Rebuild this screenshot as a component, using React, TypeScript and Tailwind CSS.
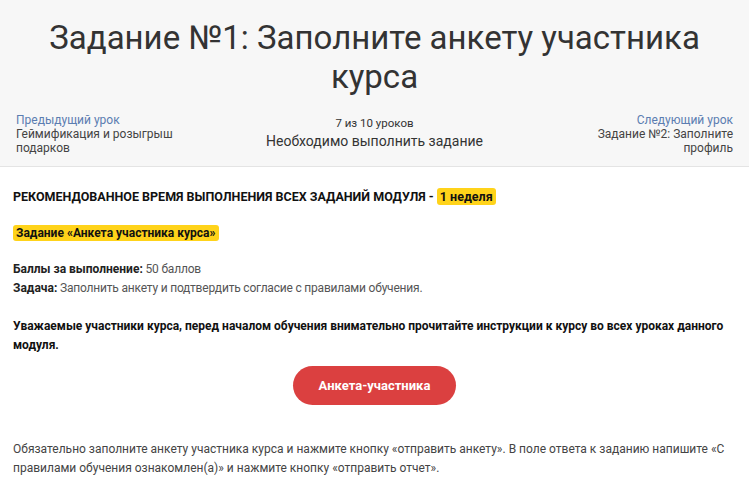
export default function App() {
  return (
    <main className="min-h-screen bg-white text-[#222] font-['Roboto',sans-serif]">
      {/* Header */}
      <header className="bg-[#f7f7f7] border-b border-[#e4e4e4] pt-[18px] pb-[11px] px-[16px]">
        <h1 className="text-center text-[33px] leading-[39px] font-normal text-[#333] px-[10px]">
          Задание №1: Заполните анкету участника курса
        </h1>
        <div className="mt-[17px] grid grid-cols-[1fr_auto_1fr] items-start">
          <div className="max-w-[165px] text-[12px] leading-[14px]">
            <p className="text-[#5b7db1]">Предыдущий урок</p>
            <p className="text-[#444]">Геймификация и розыгрыш подарков</p>
          </div>
          <div className="text-center pt-[2px]">
            <p className="text-[11.5px] leading-[16px] text-[#333]">7 из 10 уроков</p>
            <p className="text-[14px] leading-[20px] text-[#333]">Необходимо выполнить задание</p>
          </div>
          <div className="ml-auto max-w-[150px] text-right text-[12px] leading-[14px]">
            <p className="text-[#5b7db1]">Следующий урок</p>
            <p className="text-[#444]">Задание №2: Заполните профиль</p>
          </div>
        </div>
      </header>

      <div className="px-[13px] pt-[20px] text-[12px]">
        <p className="font-bold text-[#111] text-[12.5px] leading-[20px]">
          РЕКОМЕНДОВАННОЕ ВРЕМЯ ВЫПОЛНЕНИЯ ВСЕХ ЗАДАНИЙ МОДУЛЯ -{" "}
          <span className="bg-[#ffd31a] rounded-[3px] px-[3px] py-[1px]">1 неделя</span>
        </p>

        <p className="mt-[16px] font-bold text-[#111] leading-[20px]">
          <span className="bg-[#ffd31a] rounded-[3px] px-[3px] py-[1px]">Задание «Анкета участника курса»</span>
        </p>

        <div className="mt-[17px] leading-[19px] text-[#555] tracking-[-0.2px]">
          <p><b className="text-[#222] tracking-normal">Баллы за выполнение:</b> 50 баллов</p>
          <p><b className="text-[#222] tracking-normal">Задача:</b> Заполнить анкету и подтвердить согласие с правилами обучения.</p>
        </div>

        <p className="mt-[19px] font-bold text-[#111] leading-[19px]">
          Уважаемые участники курса, перед началом обучения внимательно прочитайте инструкции к курсу во всех уроках данного модуля.
        </p>

        <div className="mt-[11px] flex justify-center">
          <button className="w-[163px] h-[39px] rounded-full bg-[#db4040] text-white font-bold text-[13px]">
            Анкета-участника
          </button>
        </div>

        <p className="mt-[35px] leading-[19px] text-[#444]">
          Обязательно заполните анкету участника курса и нажмите кнопку «отправить анкету». В поле ответа к заданию напишите «С правилами обучения ознакомлен(а)» и нажмите кнопку «отправить отчет».
        </p>
      </div>
    </main>
  );
}
